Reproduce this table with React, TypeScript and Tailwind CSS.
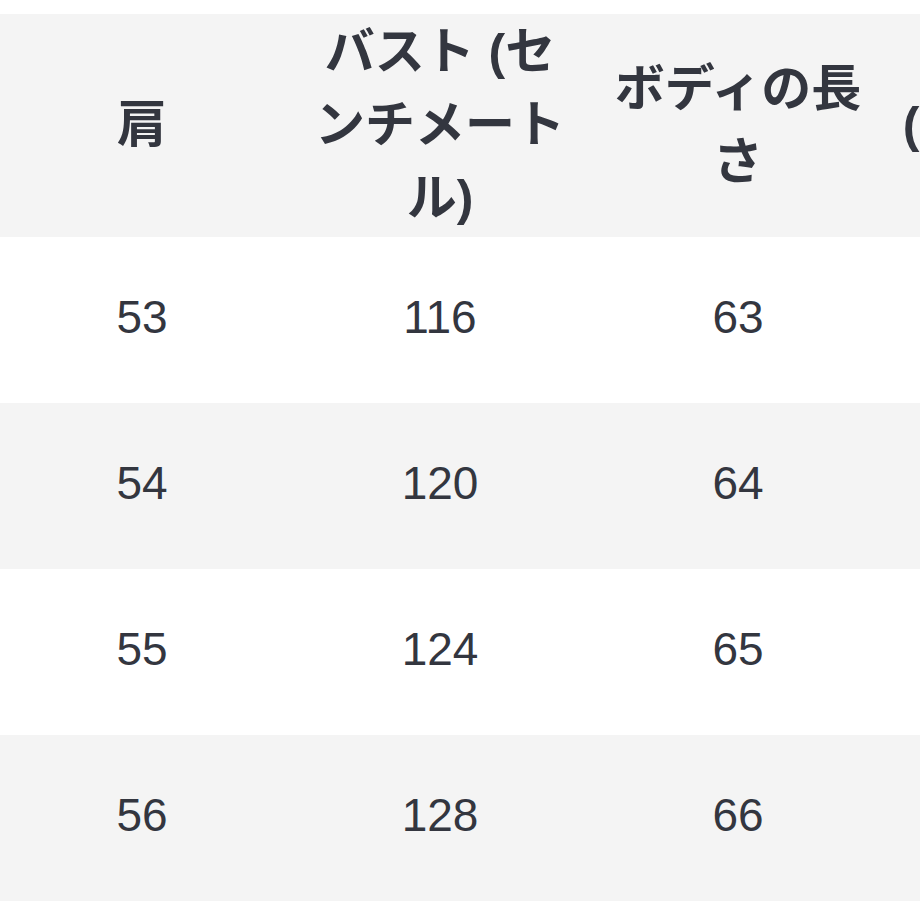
import React from 'react';

const headers: string[][] = [
  ['肩'],
  ['バスト (セ', 'ンチメート', 'ル)'],
  ['ボディの長', 'さ'],
  ['袖丈', '(センチメー', 'トル)'],
];

const rows = [
  ['53', '116', '63', '60'],
  ['54', '120', '64', '61'],
  ['55', '124', '65', '62'],
  ['56', '128', '66', '63'],
];

const App = () => {
  return (
    <div
      className="w-[920px] h-[920px] overflow-hidden bg-white text-[#33363f]"
      style={{ fontFamily: '"Liberation Sans", "Noto Sans CJK JP", sans-serif' }}
    >
      <div className="pt-[14px] ml-[-7px] w-[1192px]">
        {/* header */}
        <div className="flex h-[223px] bg-[#f4f4f4]">
          {headers.map((lines, i) => (
            <div key={i} className="w-[298px] shrink-0 flex flex-col items-center justify-center">
              {lines.map((l) => (
                <div key={l} className="text-[50px] leading-[73px] font-bold whitespace-nowrap">
                  {l}
                </div>
              ))}
            </div>
          ))}
        </div>
        {/* body */}
        {rows.map((row, r) => (
          <div key={r} className={r % 2 === 0 ? 'flex h-[166px] bg-white' : 'flex h-[166px] bg-[#f4f4f4]'}>
            {row.map((v, c) => (
              <div key={c} className="w-[298px] shrink-0 flex items-center justify-center pb-[6px] text-[46px]">
                {v}
              </div>
            ))}
          </div>
        ))}
      </div>
    </div>
  );
};

export default App;
